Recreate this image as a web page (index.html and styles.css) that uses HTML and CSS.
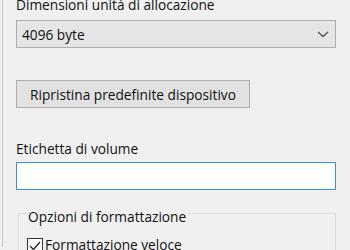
FILE: index.html
```html
<!DOCTYPE html>
<html lang="it">
<head>
<meta charset="utf-8">
<link rel="stylesheet" href="styles.css">
</head>
<body>
<div class="dialog">
  <div class="label top-label">Dimensioni unità di allocazione</div>
  <div class="select">
    <span>4096 byte</span>
    <svg class="chev" width="12" height="7" viewBox="0 0 12 7"><path d="M1 1 L6 5.5 L11 1" fill="none" stroke="#555" stroke-width="1.4"/></svg>
  </div>
  <div class="btn">Ripristina predefinite dispositivo</div>
  <div class="label vol-label">Etichetta di volume</div>
  <div class="input"></div>
  <div class="group">
    <div class="legend">Opzioni di formattazione</div>
    <div class="check-row">
      <span class="checkbox"><svg width="14" height="14" viewBox="0 0 14 14"><path d="M2 7 L5.5 10.5 L12 3" fill="none" stroke="#222" stroke-width="1.3"/></svg></span>
      <span class="check-label">Formattazione veloce</span>
    </div>
  </div>
</div>
</body>
</html>
```

FILE: styles.css
```css
html, body {
  margin: 0;
  padding: 0;
  background: #f0f0f0;
  width: 350px;
  height: 250px;
  overflow: hidden;
}
body {
  font-family: "Open Sans", "Noto Sans", sans-serif;
  font-size: 13.7px;
  color: #111;
  padding-left: 2px;
  box-sizing: border-box;
}
.dialog {
  border-left: 1px solid #c9c9c9;
  height: 250px;
  padding-left: 13px;
  padding-right: 14px;
}
.label {
  line-height: 16px;
  height: 16px;
}
.top-label {
  margin-top: -3px;
  margin-bottom: 7px;
}
.select {
  height: 26px;
  border: 1px solid #adadad;
  background: #e5e5e5;
  display: flex;
  align-items: center;
  justify-content: space-between;
  padding: 0 6px 0 5px;
}
.chev { margin-top: 1px; }
.btn {
  margin-top: 32px;
  width: 232px;
  height: 26px;
  border: 1px solid #adadad;
  background: #e1e1e1;
  display: flex;
  align-items: center;
  justify-content: center;
}
.vol-label {
  margin-top: 33px;
  margin-bottom: 5px;
}
.input {
  height: 26px;
  border: 1px solid #3c8fdc;
  background: #fff;
}
.group {
  margin-top: 23px;
  margin-left: 2px;
  border: 1px solid #dcdcdc;
  height: 40px;
  padding-left: 7px;
}
.legend {
  width: fit-content;
  background: #f0f0f0;
  padding: 0 2px;
  margin-top: -5px;
  line-height: 16px;
  height: 16px;
}
.check-row {
  display: flex;
  align-items: flex-start;
  gap: 2px;
  margin-top: 12px;
}
.checkbox {
  margin-top: 1px;
  margin-left: 1px;
  width: 14px;
  height: 14px;
  border: 1px solid #333;
  background: #fff;
  display: inline-flex;
}
.check-label {
  line-height: 16px;
}
```
